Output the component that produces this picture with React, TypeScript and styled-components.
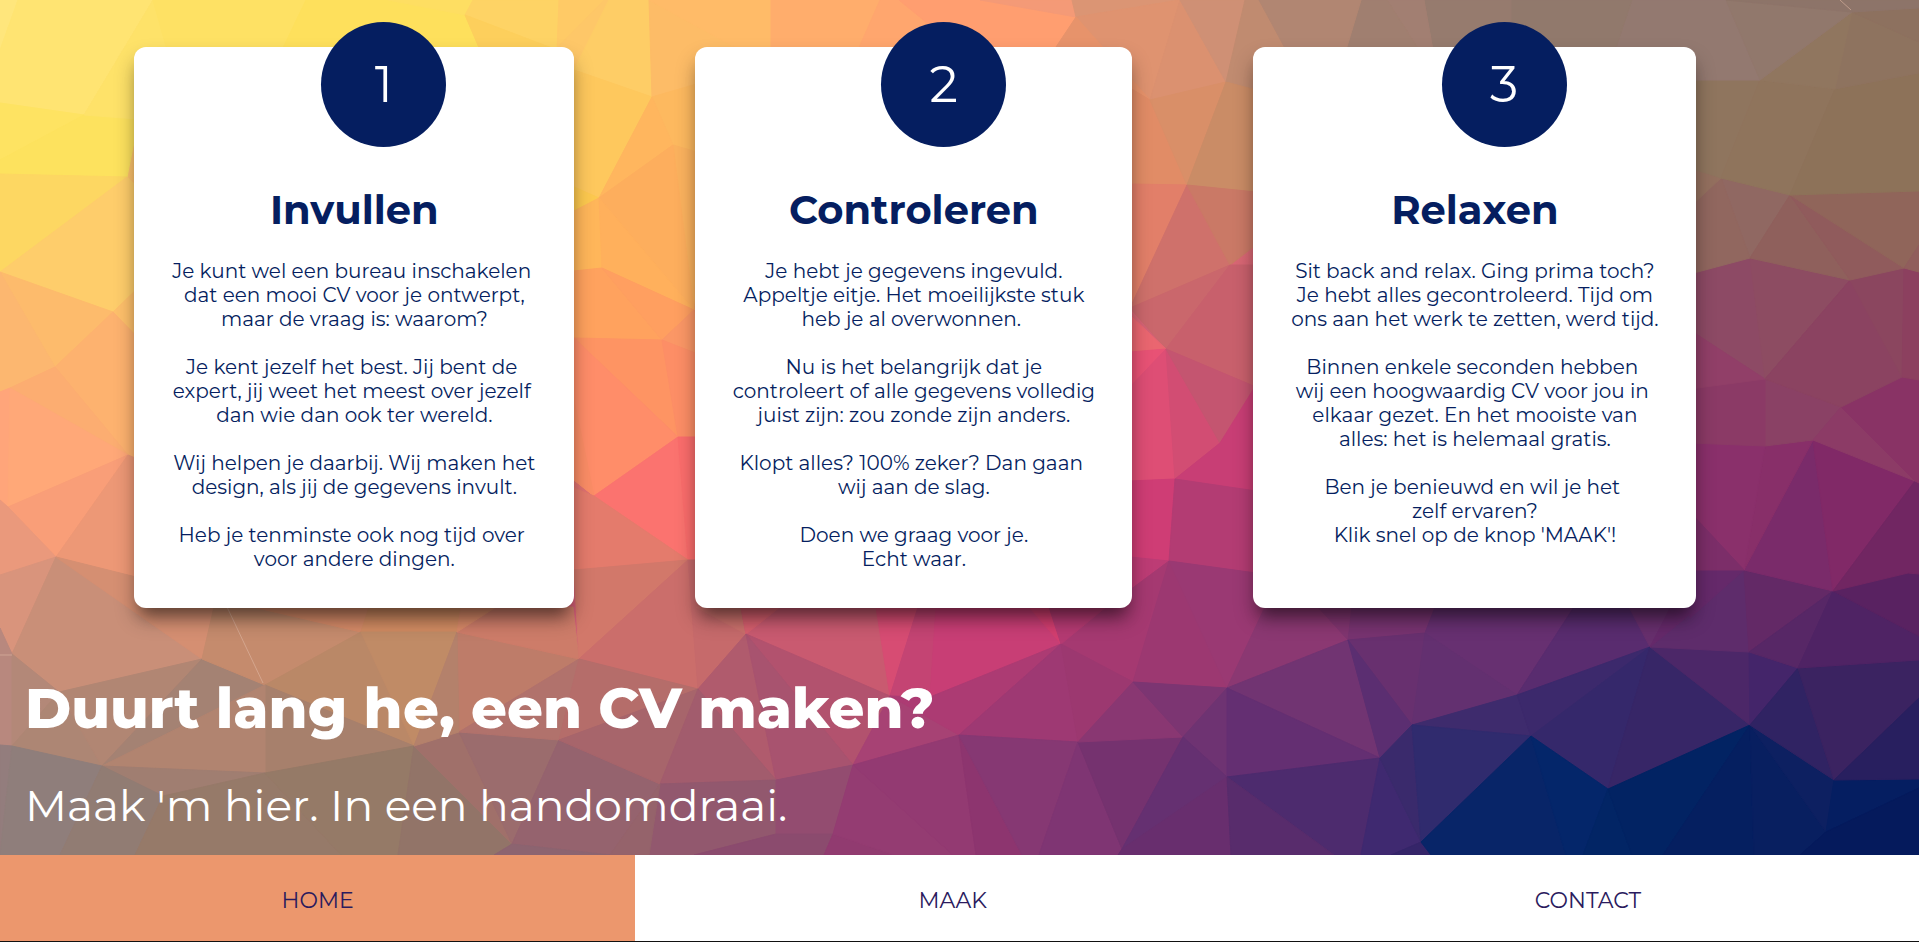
import React from 'react';
import styled, { createGlobalStyle } from 'styled-components';

const navy = '#051e60';

const GlobalStyle = createGlobalStyle`
  *, *::before, *::after { box-sizing: border-box; }
  body {
    margin: 0;
    color: ${navy};
    font-family: Montserrat, Inter, "Open Sans", sans-serif;
  }
  h1, h2, p { margin: 0; }
`;

const Page = styled.div`
  display: flex;
  flex-direction: column;
  min-height: 100vh;
`;

const Main = styled.main`
  position: relative;
  flex: 1;
  overflow: hidden;
`;

const Backdrop = styled.svg`
  position: absolute;
  inset: 0;
  width: 100%;
  height: 100%;
`;

const Content = styled.div`
  position: relative;
`;

const Steps = styled.section`
  display: grid;
  grid-template-columns: 440fr 437fr 443fr;
  column-gap: 7.75%;
  padding: 47px 11.6% 0 7%;
`;

const Card = styled.article`
  display: flex;
  flex-direction: column;
  padding-bottom: 37px;
  border-radius: 12px;
  background: #fff;
  box-shadow: 0 12px 20px rgba(0, 0, 0, 0.28), 0 14px 16px -8px rgba(0, 0, 0, 0.4);
  text-align: center;
`;

const StepNumber = styled.div`
  display: flex;
  align-items: center;
  justify-content: center;
  width: 125px;
  height: 125px;
  margin: -25px 0 0 42.5%;
  border-radius: 50%;
  background: ${navy};
  color: #fff;
  font-size: 50px;
  font-weight: 400;
`;

const CardTitle = styled.h2`
  margin-top: 39px;
  font-size: 40px;
  font-weight: 700;
  line-height: 48px;
`;

const CardText = styled.div`
  display: flex;
  flex-direction: column;
  gap: 24px;
  margin-top: 25px;
  font-size: 20px;
  font-weight: 400;
  line-height: 24px;
  white-space: nowrap;
`;

const Intro = styled.section`
  padding: 66px 25px 20px;
  color: #fff;
`;

const Headline = styled.h1`
  font-size: 56px;
  font-weight: 800;
  line-height: 68px;
`;

const Tagline = styled.p`
  margin-top: 36px;
  font-size: 44px;
  font-weight: 400;
  line-height: 54px;
`;

const Nav = styled.nav`
  display: flex;
  height: 87px;
  border-bottom: 1px solid #111;
  background: #fff;
`;

const NavLink = styled.a<{ $active?: boolean }>`
  display: flex;
  flex: 0 0 33.1%;
  align-items: center;
  justify-content: center;
  padding-top: 4px;
  background: ${({ $active }) => ($active ? '#ec976d' : '#fff')};
  color: #2b1b5e;
  font-size: 22px;
  font-weight: 400;
  text-decoration: none;
`;

const steps = [
  {
    title: 'Invullen',
    text: [
      ['Je kunt wel een bureau inschakelen\u00a0', 'dat een mooi CV voor je ontwerpt,', 'maar de vraag is: waarom?'],
      ['Je kent jezelf het best. Jij bent de\u00a0', 'expert, jij weet het meest over jezelf\u00a0', 'dan wie dan ook ter wereld.'],
      ['Wij helpen je daarbij. Wij maken het', 'design, als jij de gegevens invult.'],
      ['Heb je tenminste ook nog tijd over\u00a0', 'voor andere dingen.'],
    ],
  },
  {
    title: 'Controleren',
    text: [
      ['Je hebt je gegevens ingevuld.', 'Appeltje eitje. Het moeilijkste stuk', 'heb je al overwonnen.\u00a0'],
      ['Nu is het belangrijk dat je', 'controleert of alle gegevens volledig', 'juist zijn: zou zonde zijn anders.'],
      ['Klopt alles? 100% zeker? Dan gaan\u00a0', 'wij aan de slag.'],
      ['Doen we graag voor je.', 'Echt waar.'],
    ],
  },
  {
    title: 'Relaxen',
    text: [
      ['Sit back and relax. Ging prima toch?', 'Je hebt alles gecontroleerd. Tijd om', 'ons aan het werk te zetten, werd tijd.'],
      ['Binnen enkele seconden hebben\u00a0', 'wij een hoogwaardig CV voor jou in\u00a0', 'elkaar gezet. En het mooiste van', 'alles: het is helemaal gratis.'],
      ['Ben je benieuwd en wil je het\u00a0', 'zelf ervaren?', "Klik snel op de knop 'MAAK'!"],
    ],
  },
];

/* Each facet is a fill followed by the corners of its polygon. */
const facets: [string, string][] = [
  // top left, yellow
  ['#ffe67c', '0,0 18,0 0,50'],
  ['#ffe472', '18,0 153,0 84,115 0,103 0,50'],
  ['#fee362', '0,103 84,115 0,160'],
  ['#fde25e', '84,115 140,112 127,177 0,174 0,160'],
  ['#fee269', '153,0 167,47 150,120 84,115'],
  ['#fee164', '153,0 306,0 282,50 167,50'],
  ['#fee05c', '306,0 388,0 465,15 480,50 282,50'],
  ['#fede62', '388,0 473,0 465,15'],
  ['#fed365', '473,0 559,0 557,50 465,15'],
  ['#fdcf5c', '465,15 557,50 480,50'],
  ['#ffca66', '559,0 604,0 557,50'],
  ['#fec768', '604,0 609,0 574,70 555,50'],
  ['#fdd762', '0,174 127,177 0,272'],
  ['#fecd6b', '127,177 140,190 134,292 113,312 0,272'],
  ['#fdbb6c', '0,272 113,312 55,367'],
  ['#fec06b', '113,312 140,286 140,340'],
  ['#fcb770', '0,272 55,367 10,388 0,392'],
  ['#fdb26f', '113,312 140,340 140,460 128,455 55,367'],
  ['#fcad71', '55,367 128,455 10,388'],
  ['#ffa57a', '0,392 10,388 8,507 0,500'],
  ['#ffa878', '10,388 128,455 8,507'],
  ['#f99e78', '8,507 128,455 56,557'],
  ['#ed9876', '128,455 140,460 140,578 56,557'],
  ['#ea997c', '0,500 8,507 56,557 0,575'],
  ['#d9947c', '0,575 56,557 12,654 0,628'],
  ['#c98f78', '56,557 202,659 59,692 12,654'],
  ['#d58f72', '56,557 140,578 140,607 214,607 202,659'],
  ['#b8887e', '0,628 12,654 12,746 0,745'],
  ['#b38878', '12,654 59,692 12,746'],
  ['#ad8674', '59,692 102,766 12,746'],
  ['#b18673', '59,692 202,659 102,766'],
  ['#a48273', '202,659 265,685 102,766'],
  ['#c58b6d', '214,607 253,607 361,632 265,685 202,659'],
  ['#d58a68', '253,607 369,607 361,632'],
  ['#d18b62', '369,607 461,607 457,632 361,632'],
  ['#ba8867', '361,632 414,746 265,685'],
  ['#c08b66', '361,632 457,632 414,746'],
  ['#a7806c', '265,685 414,746 265,773'],
  ['#b18470', '265,685 265,773 102,766'],
  ['#a07e71', '102,766 265,773 163,796'],
  ['#937d7d', '0,745 12,746 0,855'],
  ['#8f7e7b', '12,746 102,766 60,855 0,855'],
  ['#917c73', '102,766 163,796 135,855 60,855'],
  ['#967a69', '163,796 265,773 341,855 135,855'],
  ['#957a67', '265,773 414,746 398,855 341,855'],
  ['#927468', '414,746 512,844 494,855 398,855'],
  ['#a0706a', '414,746 459,732 512,844'],
  ['#9b6c6d', '459,732 559,740 512,844'],
  ['#be7c69', '457,632 579,659 459,732'],
  ['#b4816b', '457,632 459,732 414,746'],
  ['#cd7c69', '457,632 496,607 573,607 579,659'],
  ['#d88968', '461,607 496,607 457,632'],
  ['#b1726c', '579,659 559,740 459,732'],
  ['#95636e', '559,740 512,844 610,855 660,784'],
  ['#8c6470', '512,844 610,855 494,855'],
  // gap between first and second card
  ['#fecd66', '609,0 649,0 652,97 574,70'],
  ['#fec85d', '574,70 652,97 599,198 574,187'],
  ['#fdc94f', '574,187 599,198 574,211'],
  ['#fdbc67', '649,0 740,50 700,83 652,97'],
  ['#fdb95f', '652,97 700,83 700,155 673,145'],
  ['#ffb65e', '652,97 673,145 599,198'],
  ['#fbb25e', '673,145 700,153 694,310 680,270'],
  ['#fdae5d', '599,198 673,145 694,310'],
  ['#ffb65a', '574,211 599,198 602,268 574,271'],
  ['#ffb05c', '599,198 694,310 602,268'],
  ['#ffa25e', '574,271 602,268 662,340 574,338'],
  ['#ff9f60', '602,268 694,310 662,340'],
  ['#fe9463', '574,338 662,340 678,437'],
  ['#fb9766', '662,340 694,310 700,355'],
  ['#fd8e66', '662,340 700,355 700,437 678,437'],
  ['#ff8d69', '574,338 678,437 594,496 574,480'],
  ['#fb8d66', '574,480 574,400 594,496'],
  ['#fb736f', '594,496 678,437 688,560'],
  ['#fb6d6c', '678,437 700,437 700,560 688,560'],
  ['#e47b6c', '574,488 594,496 688,560 574,570'],
  ['#d2786a', '574,570 688,560 579,659'],
  ['#cb6e6b', '688,560 698,689 579,659'],
  ['#c66a6b', '688,560 700,560 746,634 698,689'],
  ['#ca706c', '696,607 741,607 746,634'],
  ['#b56d6a', '579,659 698,689 559,740'],
  ['#a7656b', '698,689 660,784 559,740'],
  // top strip between second and third card
  ['#ffbb68', '649,0 771,0 771,50 740,50'],
  ['#ffad6c', '771,0 880,0 858,50 771,50'],
  ['#ffa66e', '880,0 899,0 960,50 858,50'],
  ['#ff9e70', '899,0 980,0 1076,17 1054,50 960,50'],
  ['#f49a77', '980,0 1072,0 1076,17'],
  ['#db9574', '1072,0 1180,0 1076,17'],
  ['#df9370', '1076,17 1180,0 1150,100'],
  ['#e7936b', '1076,17 1150,100 1130,88 1054,50'],
  ['#e18c66', '1130,88 1150,100 1187,185 1130,184'],
  ['#db9170', '1180,0 1226,82 1150,100'],
  ['#d98f68', '1150,100 1226,82 1187,185'],
  ['#cf9075', '1180,0 1245,0 1226,82'],
  ['#c08b70', '1245,0 1259,0 1286,50 1256,90 1226,82'],
  ['#ca8c66', '1226,82 1256,90 1256,192 1187,185'],
  ['#e27f69', '1130,184 1187,185 1160,250 1130,308'],
  ['#cf716b', '1187,185 1230,265 1130,308'],
  ['#ca7966', '1187,185 1256,192 1256,245 1230,265'],
  ['#ca676c', '1130,308 1230,265 1166,349'],
  ['#ea6670', '1130,315 1166,349 1130,352'],
  ['#c8606c', '1230,265 1256,265 1256,387 1166,349'],
  ['#e85275', '1130,352 1166,349 1130,387'],
  ['#de4e75', '1130,387 1166,349 1175,479 1130,481'],
  ['#d24d73', '1166,349 1220,443 1175,479'],
  ['#c45570', '1166,349 1256,387 1220,443'],
  ['#cf3d75', '1130,481 1175,479 1169,561 1130,557'],
  ['#c83e75', '1220,443 1256,385 1256,491 1175,479'],
  ['#b33c73', '1175,479 1256,491 1256,573 1169,561'],
  ['#bd3c75', '1130,557 1169,561 1130,590'],
  ['#a53971', '1130,590 1169,561 1133,682 1061,644 1106,607'],
  ['#9c3871', '1169,561 1227,688 1133,682'],
  ['#9a3973', '1169,561 1256,573 1265,607 1227,688'],
  // under the second card
  ['#c95a70', '741,607 876,607 890,696 746,634'],
  ['#d65f6e', '741,607 780,607 746,634'],
  ['#d74c73', '876,607 918,607 890,696'],
  ['#c44473', '918,607 936,607 930,697 890,696'],
  ['#c83e75', '936,607 1029,607 1061,644 930,697'],
  ['#d33e70', '1029,607 1049,607 1061,644'],
  ['#b43a72', '1049,607 1106,607 1061,644'],
  ['#b05b6d', '746,634 776,780 698,689'],
  ['#b2526e', '746,634 890,696 853,765'],
  ['#a8536f', '746,634 853,765 776,780'],
  ['#a25c6d', '698,689 776,780 660,784'],
  ['#a74274', '890,696 959,735 853,765'],
  ['#ac3b73', '890,696 930,697 1061,644 959,735'],
  ['#9e3973', '1061,644 1078,742 959,735'],
  ['#9c3870', '1061,644 1133,682 1078,742'],
  ['#92586e', '660,784 776,780 776,834 694,855 649,855'],
  ['#95636b', '610,855 660,784 649,855'],
  ['#934c70', '776,780 853,765 833,834 776,834'],
  ['#8b4b6e', '776,834 833,834 824,855 694,855'],
  ['#913b70', '833,834 894,855 824,855'],
  ['#943c72', '853,765 953,855 894,855 833,834'],
  ['#933a72', '853,765 959,735 976,855 953,855'],
  ['#8d356f', '959,735 1022,855 976,855'],
  ['#863873', '959,735 1078,742 1039,855 1022,855'],
  ['#7f3573', '1078,742 1122,849 1118,855 1039,855'],
  ['#75326f', '1078,742 1183,737 1122,849'],
  ['#893772', '1133,682 1183,737 1078,742'],
  ['#7c3572', '1133,682 1227,688 1183,737'],
  ['#6e3372', '1227,688 1227,777 1183,737'],
  ['#653071', '1183,737 1227,777 1122,849'],
  ['#682e6e', '1227,777 1231,855 1118,855 1122,849'],
  // under the third card
  ['#8b3872', '1265,607 1318,607 1348,640 1227,688'],
  ['#813570', '1318,607 1352,607 1348,640'],
  ['#773370', '1352,607 1435,607 1425,633 1348,640'],
  ['#673071', '1435,607 1574,607 1517,695 1425,633'],
  ['#592c6f', '1574,607 1629,607 1650,647 1517,695'],
  ['#672f6d', '1629,607 1700,607 1650,647'],
  ['#713472', '1227,688 1348,640 1380,758'],
  ['#68306f', '1348,640 1425,633 1412,725'],
  ['#5b2e71', '1348,640 1412,725 1380,758'],
  ['#633070', '1425,633 1517,695 1412,725'],
  ['#642f72', '1227,688 1380,758 1227,777'],
  ['#4d2b6e', '1227,777 1380,758 1361,855 1334,855'],
  ['#582c6c', '1227,777 1334,855 1231,855'],
  ['#3f2970', '1380,758 1421,842 1391,855 1361,855'],
  ['#3a2a6c', '1380,758 1412,725 1421,842'],
  ['#3e2b6d', '1412,725 1517,695 1531,736'],
  ['#302b6e', '1412,725 1531,736 1421,842'],
  ['#352569', '1391,855 1421,842 1431,855'],
  ['#3c296c', '1517,695 1650,647 1531,736'],
  ['#35286b', '1650,647 1608,789 1531,736'],
  ['#372667', '1650,647 1750,725 1608,789'],
  ['#082568', '1421,842 1531,736 1566,855 1431,855'],
  ['#04266a', '1531,736 1608,789 1583,855 1566,855'],
  ['#022565', '1608,789 1632,855 1583,855'],
  ['#022363', '1608,789 1750,725 1663,855 1632,855'],
  ['#051f60', '1750,725 1754,855 1663,855'],
  ['#081f60', '1750,725 1826,832 1800,855 1754,855'],
  ['#0d2061', '1750,725 1834,780 1826,832'],
  ['#051e61', '1834,780 1919,779 1919,788 1826,832'],
  ['#051a5c', '1826,832 1919,788 1919,855 1800,855'],
  ['#4c2768', '1650,647 1749,652 1750,725'],
  ['#44256a', '1749,652 1798,668 1750,725'],
  ['#302363', '1798,668 1834,780 1750,725'],
  ['#3b2361', '1798,668 1919,660 1919,698 1834,780'],
  ['#281f5f', '1919,698 1919,779 1834,780'],
  ['#5e2c6b', '1744,570 1749,652 1650,647'],
  ['#65296a', '1690,560 1744,570 1690,618'],
  ['#65296a', '1690,570 1744,570 1650,647'],
  ['#632966', '1744,570 1833,591 1749,652'],
  ['#572766', '1833,591 1798,668 1749,652'],
  ['#4f2364', '1833,591 1919,636 1919,660 1798,668'],
  ['#592261', '1833,591 1908,573 1919,574 1919,636'],
  // right edge
  ['#7a2b6a', '1813,440 1833,591 1744,570'],
  ['#812967', '1813,440 1915,481 1833,591'],
  ['#712662', '1915,481 1919,483 1919,574 1908,573 1833,591'],
  ['#882f69', '1765,446 1813,440 1744,570'],
  ['#8a306b', '1690,443 1765,446 1744,570 1690,520'],
  ['#7c2e69', '1690,512 1744,570 1690,570'],
  ['#8a4165', '1765,379 1841,407 1813,440 1765,446'],
  ['#8b3a66', '1690,389 1765,379 1765,446 1690,443'],
  ['#8c3b66', '1841,407 1915,481 1813,440'],
  ['#893365', '1841,407 1902,377 1919,380 1919,483 1915,481'],
  ['#8d4a65', '1690,274 1750,258 1765,379 1690,330'],
  ['#913f68', '1690,330 1765,379 1690,389'],
  ['#8d4c62', '1750,258 1850,280 1765,379'],
  ['#8b4361', '1850,280 1902,377 1841,407 1765,379'],
  ['#8b465f', '1850,280 1904,268 1902,377'],
  ['#8c405f', '1904,268 1919,272 1919,380 1902,377'],
  ['#906862', '1721,178 1790,195 1750,258'],
  ['#91675f', '1690,205 1721,178 1750,258 1690,274'],
  ['#94705f', '1690,168 1721,178 1690,207'],
  ['#8f605c', '1790,195 1850,280 1750,258'],
  ['#905b5c', '1790,195 1904,268 1850,280'],
  ['#90655a', '1790,195 1919,191 1919,245 1904,268'],
  ['#905e5c', '1904,268 1919,245 1919,272'],
  ['#8f755e', '1690,80 1760,80 1721,178 1690,168'],
  ['#8f745c', '1760,80 1835,89 1790,195 1721,178'],
  ['#8d7259', '1835,89 1919,73 1919,191 1790,195'],
  ['#8e735f', '1852,12 1919,42 1919,73 1835,89'],
  ['#8d715f', '1852,12 1919,8 1919,42'],
  ['#90765f', '1852,12 1835,89 1760,80'],
  ['#937970', '1632,0 1726,0 1760,80 1690,80 1690,50 1615,50'],
  ['#91786c', '1726,0 1852,12 1760,80'],
  ['#8d7469', '1726,0 1919,0 1919,8 1852,12'],
  ['#91796c', '1511,0 1632,0 1615,50 1511,50'],
  ['#967b6e', '1424,0 1511,0 1511,50 1433,50'],
  ['#a27f72', '1387,0 1424,0 1433,50 1419,50'],
  ['#a07f70', '1361,0 1387,0 1419,50 1346,50'],
  ['#b18672', '1259,0 1361,0 1346,50 1286,50'],
];

const slivers = ['227,607 263,683', '1840,0 1851,10', '0,655 12,655'];

const PolygonBackdrop = () => (
  <Backdrop viewBox="0 0 1919 855" preserveAspectRatio="none" aria-hidden="true">
    <defs>
      <linearGradient id="base" x1="0" y1="0" x2="1" y2="1">
        <stop offset="0" stopColor="#ffe472" />
        <stop offset="0.3" stopColor="#ff9d66" />
        <stop offset="0.55" stopColor="#c8507a" />
        <stop offset="1" stopColor="#051a5c" />
      </linearGradient>
    </defs>
    <rect width="1919" height="855" fill="url(#base)" />
    {facets.map(([fill, points]) => (
      <polygon key={points} points={points} fill={fill} stroke={fill} strokeWidth="1" strokeLinejoin="round" />
    ))}
    {slivers.map((points) => (
      <polyline key={points} points={points} fill="none" stroke="#e0b8a4" strokeOpacity="0.6" />
    ))}
  </Backdrop>
);

const App = () => (
  <Page>
    <GlobalStyle />
    <Main>
      <PolygonBackdrop />
      <Content>
        <Steps>
          {steps.map(({ title, text }, index) => (
            <Card key={title}>
              <StepNumber>{index + 1}</StepNumber>
              <CardTitle>{title}</CardTitle>
              <CardText>
                {text.map((lines) => (
                  <p key={lines[0]}>
                    {lines.map((line, i) => (
                      <React.Fragment key={line}>
                        {i > 0 && <br />}
                        {line}
                      </React.Fragment>
                    ))}
                  </p>
                ))}
              </CardText>
            </Card>
          ))}
        </Steps>
        <Intro>
          <Headline>Duurt lang he, een CV maken?</Headline>
          <Tagline>Maak 'm hier. In een handomdraai.</Tagline>
        </Intro>
      </Content>
    </Main>
    <Nav>
      <NavLink href="#home" $active>HOME</NavLink>
      <NavLink href="#maak">MAAK</NavLink>
      <NavLink href="#contact">CONTACT</NavLink>
    </Nav>
  </Page>
);

export default App;
